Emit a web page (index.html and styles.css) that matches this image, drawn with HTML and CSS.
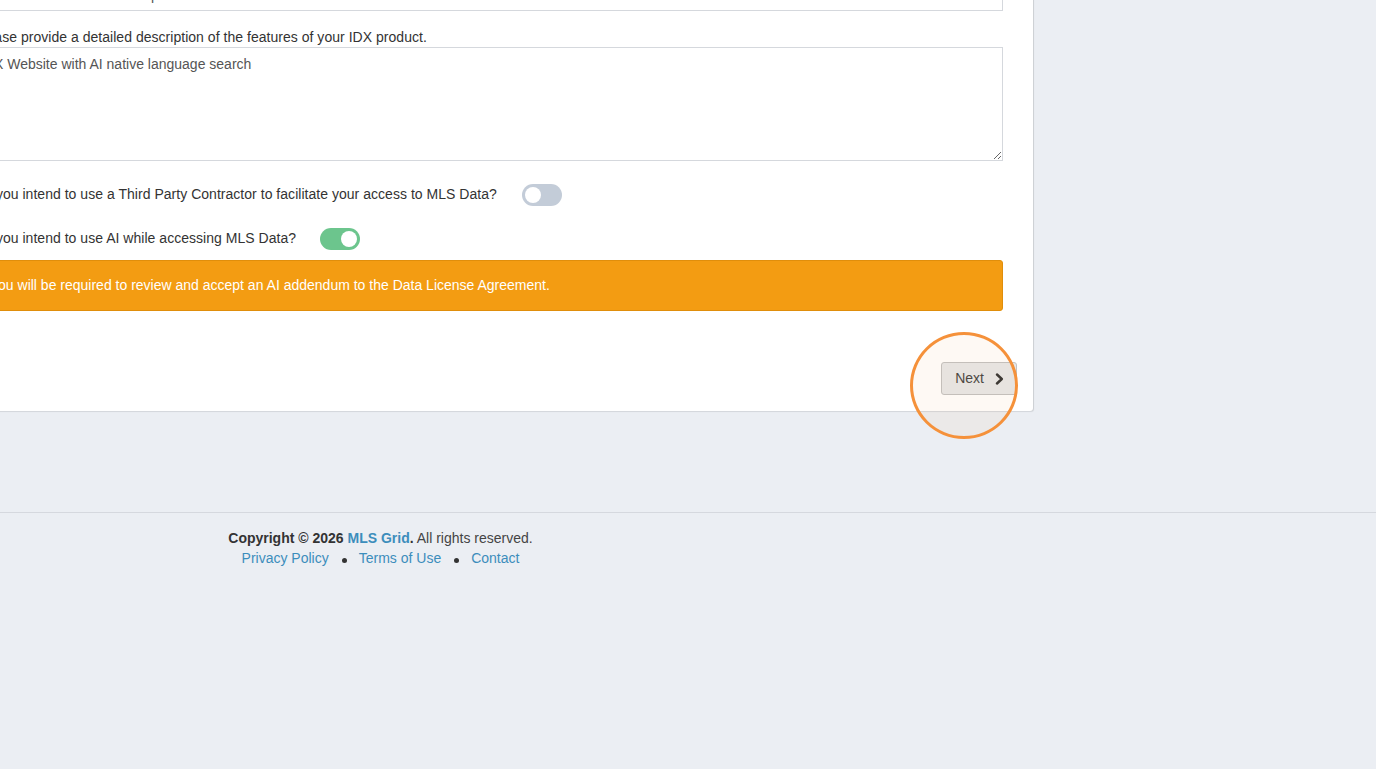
FILE: index.html
```html
<!DOCTYPE html>
<html lang="en">
<head>
<meta charset="utf-8">
<title>IDX Product Application</title>
<link rel="stylesheet" href="styles.css">
</head>
<body>
  <main class="content">
    <section class="box">
      <div class="box-body">
        <div class="form-group">
          <input class="form-control input-single" type="text" value="IDX Website Product description" readonly>
        </div>
        <div class="form-group form-group-last">
          <label class="control-label" for="features">Please provide a detailed description of the features of your IDX product.</label>
          <textarea id="features" class="form-control textarea">IDX Website with AI native language search</textarea>
        </div>

        <div class="switch-row switch-row-first">
          <span class="switch-label">Do you intend to use a Third Party Contractor to facilitate your access to MLS Data?</span>
          <span class="switch"><span class="knob"></span></span>
        </div>
        <div class="switch-row">
          <span class="switch-label">Do you intend to use AI while accessing MLS Data?</span>
          <span class="switch is-on"><span class="knob"></span></span>
        </div>

        <div class="alert alert-warning">You will be required to review and accept an AI addendum to the Data License Agreement.</div>
      </div>
      <div class="box-footer">
        <button class="btn btn-default" type="button">
          <span>Next</span>
          <svg class="chevron" width="9" height="12" viewBox="0 0 9 12" aria-hidden="true">
            <polyline points="2,1.5 6.8,6 2,10.5" fill="none" stroke="#333" stroke-width="2.4" stroke-linecap="round" stroke-linejoin="round"/>
          </svg>
        </button>
      </div>
    </section>
  </main>

  <footer class="main-footer">
    <div class="footer-inner">
      <div class="copyright"><strong>Copyright © 2026 <a href="#">MLS Grid</a>.</strong> All rights reserved.</div>
      <nav class="footer-links">
        <a href="#">Privacy Policy</a>
        <span class="dot"></span>
        <a href="#">Terms of Use</a>
        <span class="dot"></span>
        <a href="#">Contact</a>
      </nav>
    </div>
  </footer>

  <div class="highlight-ring"></div>
</body>
</html>
```

FILE: styles.css
```css
* {
  box-sizing: border-box;
}

html,
body {
  margin: 0;
  padding: 0;
  height: 100%;
  overflow: hidden;
}

body {
  background: #ebeef3;
  font-family: "Liberation Sans", Arial, Helvetica, sans-serif;
  font-size: 14px;
  line-height: 20px;
  color: #333;
}

a {
  color: #3c8dbc;
  text-decoration: none;
}

/* ---- form card ---- */
.box {
  width: 1089px;
  margin-left: -56px;
  margin-top: -23px;
  background: #fff;
  border-radius: 0 0 3px 0;
  box-shadow: 1px 1px 1px rgba(0, 0, 0, 0.1), 1px 0 0 #e3e6eb;
}

.box-body {
  padding: 0 30px;
}

.form-group {
  margin-bottom: 16px;
}

.form-group-last {
  margin-bottom: 0;
}

.control-label {
  display: block;
  font-weight: normal;
  line-height: 20px;
  color: #333;
  letter-spacing: 0.03px;
}

.form-control {
  display: block;
  width: 100%;
  height: 34px;
  padding: 6px 5px;
  border: 1px solid #d5d8dd;
  border-radius: 0;
  background: #fff;
  font-family: inherit;
  font-size: 14px;
  line-height: 20px;
  color: #555;
  outline: none;
}

.input-single {
  padding-top: 7px;
  padding-bottom: 5px;
}

.textarea {
  height: 114px;
  resize: vertical;
}

/* ---- toggle questions ---- */
.switch-row {
  display: flex;
  align-items: center;
  gap: 24px;
  height: 22px;
  margin-top: 22px;
}

.switch-row-first {
  margin-top: 23px;
  gap: 25px;
}

.switch-label {
  color: #333;
  margin-top: -3px;
  letter-spacing: 0.03px;
}

.switch {
  position: relative;
  flex: none;
  width: 40px;
  height: 22px;
  border-radius: 11px;
  background: #c3ccd8;
}

.switch .knob {
  position: absolute;
  top: 3px;
  left: 3px;
  width: 16px;
  height: 16px;
  border-radius: 50%;
  background: #fff;
}

.switch.is-on {
  background: #6cc58d;
}

.switch.is-on .knob {
  left: 21px;
}

/* ---- warning callout ---- */
.alert {
  margin-top: 10px;
  padding: 15px;
  line-height: 19px;
  border-radius: 3px;
  border: 1px solid #e08e0b;
  background: #f39c12;
  color: #fff;
}

/* ---- card footer ---- */
.box-footer {
  display: flex;
  justify-content: flex-end;
  padding: 51px 16px 16px;
}

.btn {
  display: inline-flex;
  align-items: center;
  gap: 11px;
  padding: 6px 12px 6px 13px;
  line-height: 19px;
  font-family: inherit;
  font-size: 14px;
  color: #444;
  background: #e7e8e9;
  border: 1px solid #c2c2c2;
  border-radius: 3px;
  cursor: pointer;
}

.chevron {
  display: block;
}

/* ---- page footer ---- */
.main-footer {
  margin-top: 101px;
  border-top: 1px solid #d5d8de;
  padding-top: 15px;
  color: #444;
}

.footer-inner {
  width: 761px;
  text-align: center;
}

.copyright strong {
  color: #333;
}

.footer-links {
  display: flex;
  justify-content: center;
  align-items: center;
}

.footer-links .dot {
  width: 5px;
  height: 5px;
  margin: 4px 12px 0 13px;
  border-radius: 50%;
  background: #333;
}

/* ---- call-out ring drawn over the Next button ---- */
.highlight-ring {
  position: absolute;
  left: 910px;
  top: 332px;
  width: 108px;
  height: 107px;
  border-radius: 50%;
  border: 3px solid #f5913a;
  background: rgba(245, 146, 62, 0.06);
  pointer-events: none;
}
```
